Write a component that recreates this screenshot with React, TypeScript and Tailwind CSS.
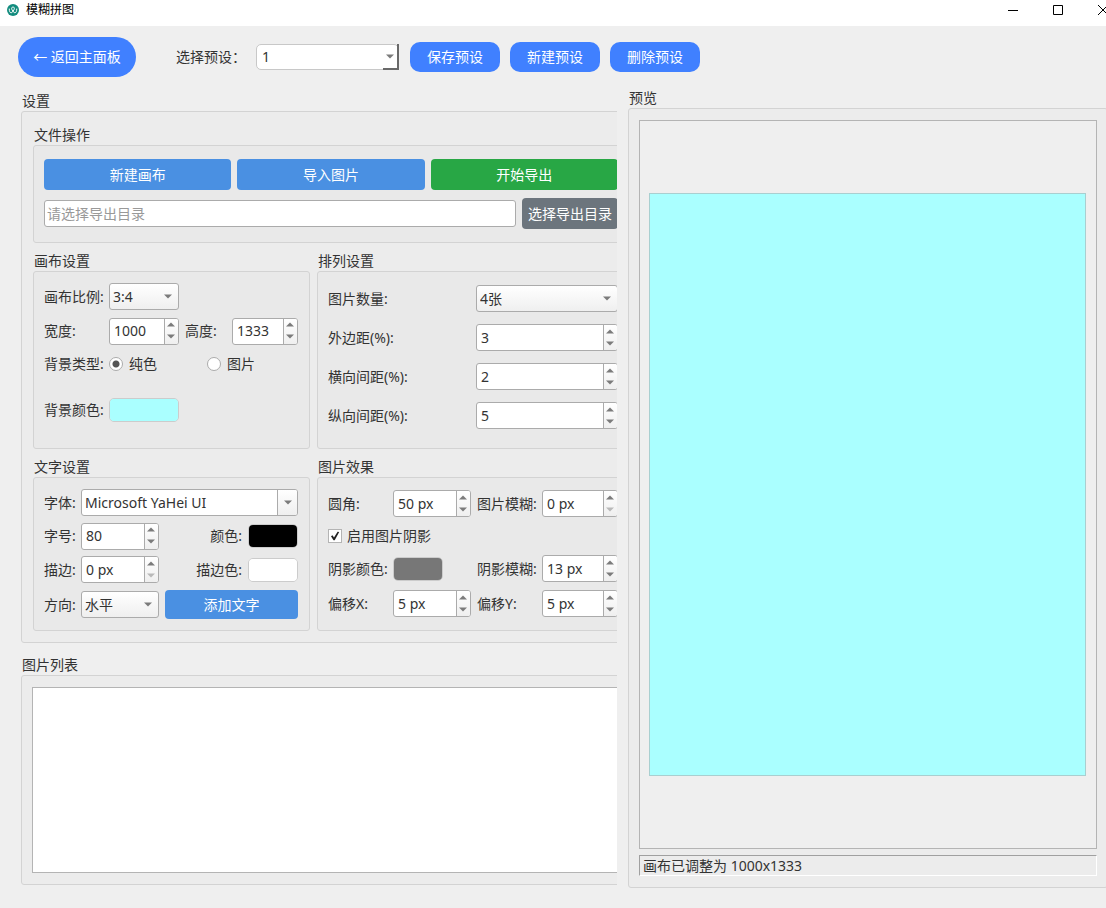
import React, { useState } from "react";
import clsx from "clsx";

// ===========================
// Shared controls
// ===========================

function Arrow({ up = false, muted = false }: { up?: boolean; muted?: boolean }) {
  return (
    <svg
      width="8"
      height="5"
      viewBox="0 0 8 5"
      className={muted ? "fill-[#b9b9b9]" : "fill-[#7b7b7b]"}
    >
      <path d={up ? "M0 4.5 4 .5l4 4z" : "M0 .5h8l-4 4z"} />
    </svg>
  );
}

function Group({
  title,
  className,
  bodyClassName,
  children,
}: {
  title: string;
  className?: string;
  bodyClassName?: string;
  children: React.ReactNode;
}) {
  return (
    <section className={clsx("flex min-w-0 flex-col", className)}>
      <h2 className="h-5 pl-px leading-5">{title}</h2>
      <div
        className={clsx(
          "flex-1 rounded-[3px] border border-[#d3d3d3] bg-black/[0.013]",
          bodyClassName
        )}
      >
        {children}
      </div>
    </section>
  );
}

function SpinBox({
  id,
  value,
  onChange,
  suffix = "",
}: {
  id: string;
  value: number;
  onChange: (value: number) => void;
  suffix?: string;
}) {
  return (
    <div className="flex h-[27px] min-w-0 overflow-hidden rounded-[3px] border border-[#ababab] bg-white">
      <input
        id={id}
        className="w-0 min-w-0 flex-1 bg-transparent pl-1 outline-none"
        value={`${value}${suffix}`}
        onChange={(e) => onChange(parseInt(e.target.value, 10) || 0)}
      />
      <div className="flex w-[14px] flex-col border-l border-[#ababab] bg-linear-to-b from-white to-[#efefef] pr-px">
        <button
          type="button"
          aria-label="增加"
          className="flex flex-1 items-center justify-center"
          onClick={() => onChange(value + 1)}
        >
          <Arrow up />
        </button>
        <button
          type="button"
          aria-label="减少"
          disabled={value === 0}
          className="flex flex-1 items-center justify-center pb-px"
          onClick={() => onChange(value - 1)}
        >
          <Arrow muted={value === 0} />
        </button>
      </div>
    </div>
  );
}

function ComboBox({ id, options }: { id: string; options: string[] }) {
  return (
    <div className="relative h-[27px] min-w-0">
      <select
        id={id}
        className="h-full w-full appearance-none rounded-[3px] border border-[#ababab] bg-linear-to-b from-white to-[#efefef] pl-[3px] outline-none"
      >
        {options.map((option) => (
          <option key={option}>{option}</option>
        ))}
      </select>
      <span className="pointer-events-none absolute inset-y-0 right-[7px] flex items-center">
        <Arrow />
      </span>
    </div>
  );
}

function ColorSwatch({
  id,
  value,
  onChange,
  className,
}: {
  id: string;
  value: string;
  onChange: (value: string) => void;
  className?: string;
}) {
  return (
    <input
      id={id}
      type="color"
      value={value}
      onChange={(e) => onChange(e.target.value)}
      className={clsx(
        "h-6 appearance-none overflow-hidden rounded-[5px] border border-[#cccccc] p-0 [&::-webkit-color-swatch]:border-0 [&::-webkit-color-swatch-wrapper]:p-0",
        className
      )}
      style={{ backgroundColor: value }}
    />
  );
}

function ActionButton({
  className,
  children,
}: {
  className?: string;
  children: React.ReactNode;
}) {
  return (
    <button
      type="button"
      className={clsx("rounded-[4px] text-white whitespace-nowrap", className)}
    >
      {children}
    </button>
  );
}

// ===========================
// Window chrome and toolbar
// ===========================

function TitleBar() {
  return (
    <header className="flex h-[26px] items-start justify-between overflow-hidden bg-white text-xs text-black">
      <div className="flex h-5 items-center gap-[7px] pl-[7px]">
        <svg width="12" height="12" viewBox="0 0 24 24" fill="none">
          <circle cx="12" cy="12" r="12" fill="#128c7e" />
          <path
            d="M4.500 10c0 4.500 1.300 7.500 3.600 7.500S12 15 14 11.500c1.500-2.800.5-5.500-2-5.500s-3.500 2.700-2 5.500c2 3.500 3.600 6 5.900 6s3.600-3 3.600-7.500"
            stroke="#fff"
            strokeWidth="2"
            strokeLinecap="round"
          />
        </svg>
        <h1 className="leading-5">模糊拼图</h1>
      </div>
      <div className="-mr-[21px] flex h-5 shrink-0">
        <button type="button" aria-label="最小化" className="flex w-[45px] items-center pl-[16px]">
          <svg width="10" height="10" viewBox="0 0 10 10" stroke="#000">
            <path d="M0 5.500h10" />
          </svg>
        </button>
        <button type="button" aria-label="最大化" className="flex w-[45px] items-center pl-[16px]">
          <svg width="10" height="10" viewBox="0 0 10 10" fill="none" stroke="#000">
            <path d="M.5.5h9v9h-9z" />
          </svg>
        </button>
        <button type="button" aria-label="关闭" className="flex w-[45px] items-center pl-[16px]">
          <svg width="10" height="10" viewBox="0 0 10 10" stroke="#000">
            <path d="M0 0l10 10M10 0L0 10" />
          </svg>
        </button>
      </div>
    </header>
  );
}

function Toolbar() {
  return (
    <nav className="flex items-center pt-[11px] pl-[18px] text-sm">
      <ActionButton className="h-10 w-[118px] rounded-[20px]! bg-[#4080ff]">
        ← 返回主面板
      </ActionButton>
      <label htmlFor="preset" className="ml-10 w-20 whitespace-nowrap">
        选择预设：
      </label>
      <div className="relative h-[26px] w-[143px]">
        <select
          id="preset"
          className="h-full w-full appearance-none rounded-[5px] border border-[#c8c8c8] bg-white pl-[5px] outline-none"
        >
          <option>1</option>
          <option>2</option>
        </select>
        <span className="pointer-events-none absolute inset-y-0 right-0 flex w-4 items-center justify-center border-r-2 border-b-2 border-[#696969]">
          <Arrow />
        </span>
      </div>
      <div className="ml-[11px] flex gap-[10px]">
        {["保存预设", "新建预设", "删除预设"].map((name) => (
          <ActionButton key={name} className="h-[30px] w-[90px] rounded-[10px]! bg-[#4080ff]">
            {name}
          </ActionButton>
        ))}
      </div>
    </nav>
  );
}

// ===========================
// Settings groups
// ===========================

function FileGroup() {
  return (
    <Group title="文件操作" bodyClassName="flex flex-col gap-2 px-[10px] py-[13px]">
      <div className="grid grid-cols-3 gap-[6px]">
        <ActionButton className="h-[31px] bg-[#4a90e2]">新建画布</ActionButton>
        <ActionButton className="h-[31px] bg-[#4a90e2]">导入图片</ActionButton>
        <ActionButton className="h-[31px] bg-[#28a745]">开始导出</ActionButton>
      </div>
      <div className="flex items-center gap-[6px]">
        <input
          aria-label="导出目录"
          placeholder="请选择导出目录"
          className="h-[27px] min-w-0 flex-1 rounded-[3px] border border-[#ababab] bg-white pl-[2px] outline-none placeholder:text-[#999999]"
        />
        <ActionButton className="h-[31px] bg-[#6c757d] px-[6px]">选择导出目录</ActionButton>
      </div>
    </Group>
  );
}

const radioClass =
  "size-[14px] appearance-none rounded-full border border-[#ababab] bg-white checked:bg-[radial-gradient(circle,#555_0_3px,#fff_4px)]";

function CanvasGroup({
  color,
  onColorChange,
  width,
  height,
  onWidthChange,
  onHeightChange,
}: {
  color: string;
  onColorChange: (value: string) => void;
  width: number;
  height: number;
  onWidthChange: (value: number) => void;
  onHeightChange: (value: number) => void;
}) {
  return (
    <Group
      title="画布设置"
      bodyClassName="grid grid-cols-[59px_70px_41px_1fr] grid-rows-[27px_28px_24px_54px] items-center gap-x-[6px] gap-y-[7px] py-[11px] pr-[11px] pl-[10px] whitespace-nowrap"
    >
      <label htmlFor="ratio">画布比例:</label>
      <ComboBox id="ratio" options={["3:4", "1:1", "4:3", "9:16"]} />
      <span className="col-span-2" />
      <label htmlFor="width">宽度:</label>
      <SpinBox id="width" value={width} onChange={onWidthChange} />
      <label htmlFor="height">高度:</label>
      <SpinBox id="height" value={height} onChange={onHeightChange} />
      <span>背景类型:</span>
      <div className="col-span-3 grid grid-cols-[98px_1fr]">
        <label className="flex items-center gap-[6px]">
          <input type="radio" name="bg" defaultChecked className={radioClass} />
          纯色
        </label>
        <label className="flex items-center gap-[6px]">
          <input type="radio" name="bg" className={radioClass} />
          图片
        </label>
      </div>
      <label htmlFor="bg-color">背景颜色:</label>
      <ColorSwatch id="bg-color" value={color} onChange={onColorChange} className="w-[70px]" />
    </Group>
  );
}

function ArrangeGroup() {
  const [margin, setMargin] = useState(3);
  const [gapX, setGapX] = useState(2);
  const [gapY, setGapY] = useState(5);

  return (
    <Group
      title="排列设置"
      bodyClassName="grid grid-cols-[1fr_142px] content-start items-center gap-y-3 px-[10px] pt-[13px]"
    >
      <label htmlFor="count">图片数量:</label>
      <ComboBox id="count" options={["4张", "6张", "9张"]} />
      <label htmlFor="margin">外边距(%):</label>
      <SpinBox id="margin" value={margin} onChange={setMargin} />
      <label htmlFor="gap-x">横向间距(%):</label>
      <SpinBox id="gap-x" value={gapX} onChange={setGapX} />
      <label htmlFor="gap-y">纵向间距(%):</label>
      <SpinBox id="gap-y" value={gapY} onChange={setGapY} />
    </Group>
  );
}

function TextGroup() {
  const [font, setFont] = useState("Microsoft YaHei UI");
  const [size, setSize] = useState(80);
  const [stroke, setStroke] = useState(0);
  const [color, setColor] = useState("#000000");
  const [strokeColor, setStrokeColor] = useState("#ffffff");

  return (
    <Group
      title="文字设置"
      bodyClassName="grid grid-cols-[31px_78px_1fr_50px] grid-rows-[27px_26px_27px_29px] items-center gap-x-[6px] gap-y-[7px] pt-[11px] pr-[11px] pb-[11px] pl-[10px] whitespace-nowrap"
    >
      <label htmlFor="font">字体:</label>
      <div className="col-span-3 flex h-[27px] overflow-hidden rounded-[3px] border border-[#ababab] bg-white">
        <input
          id="font"
          value={font}
          onChange={(e) => setFont(e.target.value)}
          className="min-w-0 flex-1 pl-[3px] outline-none"
        />
        <button
          type="button"
          aria-label="选择字体"
          className="flex w-5 items-center justify-center border-l border-[#ababab] bg-linear-to-b from-white to-[#efefef]"
        >
          <Arrow />
        </button>
      </div>
      <label htmlFor="font-size">字号:</label>
      <SpinBox id="font-size" value={size} onChange={setSize} />
      <label htmlFor="font-color" className="text-right">
        颜色:
      </label>
      <ColorSwatch id="font-color" value={color} onChange={setColor} className="w-full" />
      <label htmlFor="stroke">描边:</label>
      <SpinBox id="stroke" value={stroke} onChange={setStroke} suffix=" px" />
      <label htmlFor="stroke-color" className="text-right">
        描边色:
      </label>
      <ColorSwatch
        id="stroke-color"
        value={strokeColor}
        onChange={setStrokeColor}
        className="w-full"
      />
      <label htmlFor="direction">方向:</label>
      <ComboBox id="direction" options={["水平", "垂直"]} />
      <ActionButton className="col-span-2 h-[29px] bg-[#4a90e2]">添加文字</ActionButton>
    </Group>
  );
}

function EffectGroup() {
  const [radius, setRadius] = useState(50);
  const [blur, setBlur] = useState(0);
  const [shadow, setShadow] = useState(true);
  const [shadowColor, setShadowColor] = useState("#777777");
  const [shadowBlur, setShadowBlur] = useState(13);
  const [offsetX, setOffsetX] = useState(5);
  const [offsetY, setOffsetY] = useState(5);

  return (
    <Group
      title="图片效果"
      bodyClassName="grid grid-cols-[59px_78px_59px_1fr] grid-rows-[27px_24px_27px_29px] content-start items-center gap-x-[6px] gap-y-[7px] px-[10px] pt-3 whitespace-nowrap"
    >
      <label htmlFor="radius">圆角:</label>
      <SpinBox id="radius" value={radius} onChange={setRadius} suffix=" px" />
      <label htmlFor="blur">图片模糊:</label>
      <SpinBox id="blur" value={blur} onChange={setBlur} suffix=" px" />
      <label className="col-span-4 flex items-center gap-[5px]">
        <span className="relative size-[14px]">
          <input
            type="checkbox"
            checked={shadow}
            onChange={(e) => setShadow(e.target.checked)}
            className="block size-[14px] appearance-none border border-[#b4b4b4] bg-white"
          />
          {shadow && (
            <svg
              viewBox="0 0 14 14"
              className="pointer-events-none absolute inset-0 fill-[#222222]"
            >
              <path d="M3 7.200l1.500-.9 1.500 2.200L9.600 2.800l1.600.3-4.500 8.100H5.500z" />
            </svg>
          )}
        </span>
        启用图片阴影
      </label>
      <label htmlFor="shadow-color">阴影颜色:</label>
      <ColorSwatch
        id="shadow-color"
        value={shadowColor}
        onChange={setShadowColor}
        className="w-[50px]"
      />
      <label htmlFor="shadow-blur">阴影模糊:</label>
      <SpinBox id="shadow-blur" value={shadowBlur} onChange={setShadowBlur} suffix=" px" />
      <label htmlFor="offset-x">偏移X:</label>
      <SpinBox id="offset-x" value={offsetX} onChange={setOffsetX} suffix=" px" />
      <label htmlFor="offset-y">偏移Y:</label>
      <SpinBox id="offset-y" value={offsetY} onChange={setOffsetY} suffix=" px" />
    </Group>
  );
}

// ===========================
// Main window
// ===========================

export default function App() {
  const [canvasColor, setCanvasColor] = useState("#aaffff");
  const [width, setWidth] = useState(1000);
  const [height, setHeight] = useState(1333);

  return (
    <div className="flex min-h-screen flex-col overflow-hidden bg-[#efefef] font-['Noto_Sans','Noto_Sans_CJK_SC',sans-serif] text-sm text-[#333333]">
      <TitleBar />
      <Toolbar />
      <main className="-mr-[2px] grid flex-1 grid-cols-[596fr_480fr] gap-[11px] pt-[11px] pl-[21px]">
        {/* The settings are wider than their pane, the pane cuts them off */}
        <div className="min-w-0 overflow-hidden pt-[3px] pb-[23px]">
          <div className="flex h-full w-full min-w-[620px] flex-col gap-3">
            <Group
              title="设置"
              className="shrink-0"
              bodyClassName="flex flex-col gap-2 px-[11px] pt-[13px] pb-[11px]"
            >
              <FileGroup />
              <div className="grid grid-cols-[277fr_312fr] gap-x-[7px] gap-y-2">
                <CanvasGroup
                  color={canvasColor}
                  onColorChange={setCanvasColor}
                  width={width}
                  height={height}
                  onWidthChange={setWidth}
                  onHeightChange={setHeight}
                />
                <ArrangeGroup />
                <TextGroup />
                <EffectGroup />
              </div>
            </Group>
            <Group title="图片列表" className="flex-1" bodyClassName="flex px-[10px] py-[11px]">
              <ul className="flex-1 border border-[#b4b4b4] bg-white" />
            </Group>
          </div>
        </div>

        <Group
          title="预览"
          className="pb-5"
          bodyClassName="flex flex-col gap-[6px] px-[10px] py-[11px]"
        >
          <div className="flex flex-1 items-center border border-[#b4b4b4] bg-[#efefef] pr-[10px] pl-[9px]">
            <div
              className="aspect-3/4 w-full border border-[#a9cfd0]"
              style={{ backgroundColor: canvasColor }}
            />
          </div>
          <p className="h-[21px] border border-t-[#a0a0a0] border-r-white border-b-white border-l-[#a0a0a0] pl-[3px] leading-5">
            画布已调整为 {width}x{height}
          </p>
        </Group>
      </main>
    </div>
  );
}
